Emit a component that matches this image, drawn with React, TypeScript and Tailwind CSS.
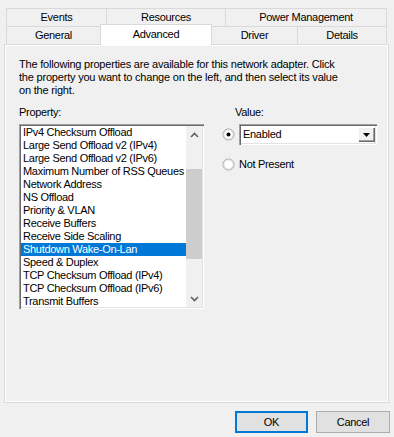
import React from "react";

const propiedades = [
  "IPv4 Checksum Offload",
  "Large Send Offload v2 (IPv4)",
  "Large Send Offload v2 (IPv6)",
  "Maximum Number of RSS Queues",
  "Network Address",
  "NS Offload",
  "Priority & VLAN",
  "Receive Buffers",
  "Receive Side Scaling",
  "Shutdown Wake-On-Lan",
  "Speed & Duplex",
  "TCP Checksum Offload (IPv4)",
  "TCP Checksum Offload (IPv6)",
  "Transmit Buffers",
];

const sunken =
  "shadow-[inset_1px_1px_0_#a0a0a0,inset_2px_2px_0_#696969,inset_-1px_-1px_0_#ffffff,inset_-2px_-2px_0_#e3e3e3]";

function Radio({ checked }: { checked?: boolean }) {
  return (
    <svg width="13" height="13" viewBox="0 0 13 13" className="shrink-0">
      <circle cx="6.5" cy="6.5" r="5.5" fill="#fff" stroke="#a0a0a0" />
      <circle cx="6.5" cy="6.5" r="4.5" fill="none" stroke="#e3e3e3" />
      {checked && <circle cx="6.5" cy="6.5" r="2" fill="#000" />}
    </svg>
  );
}

function Chevron({ up }: { up?: boolean }) {
  return (
    <svg width="9" height="6" viewBox="0 0 9 6">
      <path
        d={up ? "M1 5 L4.5 1.5 L8 5" : "M1 1 L4.5 4.5 L8 1"}
        fill="none"
        stroke="#606060"
        strokeWidth="1.6"
      />
    </svg>
  );
}

export default function App() {
  return (
    <div
      className="w-[394px] h-[437px] bg-[#f0f0f0] pt-[8px] text-[11px] leading-[13px] text-black tracking-[-0.3px]"
      style={{ fontFamily: '"Liberation Sans", Arial, sans-serif' }}
    >
      {/* pestañas, fila de arriba */}
      <div className="flex h-[18px] ml-[6px]">
        <div className="w-[101px] border-t border-l border-r border-[#d9d9d9] flex items-center justify-center">Events</div>
        <div className="w-[120px] -ml-px border-t border-l border-r border-[#d9d9d9] flex items-center justify-center">Resources</div>
        <div className="w-[162px] -ml-px border-t border-l border-r border-[#d9d9d9] flex items-center justify-center">Power Management</div>
      </div>
      {/* pestañas, fila de abajo */}
      <div className="flex h-[18px] ml-[6px] items-start">
        <div className="w-[95px] h-[18px] border-t border-l border-r border-[#d9d9d9] flex items-center justify-center">General</div>
        <div className="relative z-10 w-[112px] h-[21px] -mt-[2px] -ml-px bg-white border-t border-l border-r border-[#d9d9d9] flex items-center justify-center pb-[2px]">Advanced</div>
        <div className="w-[87px] h-[18px] -ml-px border-t border-l border-r border-[#d9d9d9] flex items-center justify-center">Driver</div>
        <div className="w-[90px] h-[18px] -ml-px border-t border-l border-r border-[#d9d9d9] flex items-center justify-center">Details</div>
      </div>

      {/* panel */}
      <div className="ml-[4px] w-[385px] h-[359px] border border-[#d9d9d9] shadow-[inset_1px_1px_0_#ffffff,inset_-1px_-1px_0_#ffffff] pl-[14px] pt-[13px]">
        <p className="whitespace-nowrap tracking-[-0.2px]">
          The following properties are available for this network adapter. Click
          <br />
          the property you want to change on the left, and then select its value
          <br />
          on the right.
        </p>

        <div className="flex mt-[9px]">
          {/* Property */}
          <div className="w-[185px]">
            <div>Property:</div>
            <div className={`mt-[5px] h-[185px] bg-white p-[2px] flex ${sunken}`}>
              <div className="flex-1 flex flex-col">
                {propiedades.map((p) => (
                  <div
                    key={p}
                    className={`h-[13px] pl-[2px] whitespace-nowrap ${
                      p === "Shutdown Wake-On-Lan" ? "bg-[#0078d7] text-white" : ""
                    }`}
                  >
                    {p}
                  </div>
                ))}
              </div>
              <div className="w-[16px] bg-[#f0f0f0] flex flex-col">
                <div className="h-[17px] flex items-center justify-center">
                  <Chevron up />
                </div>
                <div className="flex-1">
                  <div className="mt-[26px] h-[90px] bg-[#cdcdcd]" />
                </div>
                <div className="h-[17px] flex items-center justify-center">
                  <Chevron />
                </div>
              </div>
            </div>
          </div>

          {/* Value */}
          <div className="ml-[18px]">
            <div className="ml-[13px]">Value:</div>
            <div className="mt-[5px] flex items-center gap-[4px]">
              <Radio checked />
              <div className={`w-[138px] h-[21px] bg-white flex items-center justify-between pl-[4px] pr-[2px] ${sunken}`}>
                <span>Enabled</span>
                <div className="w-[17px] h-[15px] bg-[#f0f0f0] shadow-[inset_1px_1px_0_#ffffff,inset_-1px_-1px_0_#696969,inset_-2px_-2px_0_#a0a0a0] flex items-center justify-center">
                  <svg width="7" height="4" viewBox="0 0 7 4">
                    <path d="M0 0 H7 L3.5 4 Z" fill="#000" />
                  </svg>
                </div>
              </div>
            </div>
            <div className="mt-[13px] flex items-center gap-[4px]">
              <Radio />
              <span>Not Present</span>
            </div>
          </div>
        </div>
      </div>

      {/* botones */}
      <div className="flex justify-end gap-[8px] pr-[4px] mt-[8px]">
        <button className="w-[73px] h-[22px] bg-[#e1e1e1] border-2 border-[#0078d7]">OK</button>
        <button className="w-[74px] h-[22px] bg-[#e1e1e1] border border-[#adadad]">Cancel</button>
      </div>
    </div>
  );
}
